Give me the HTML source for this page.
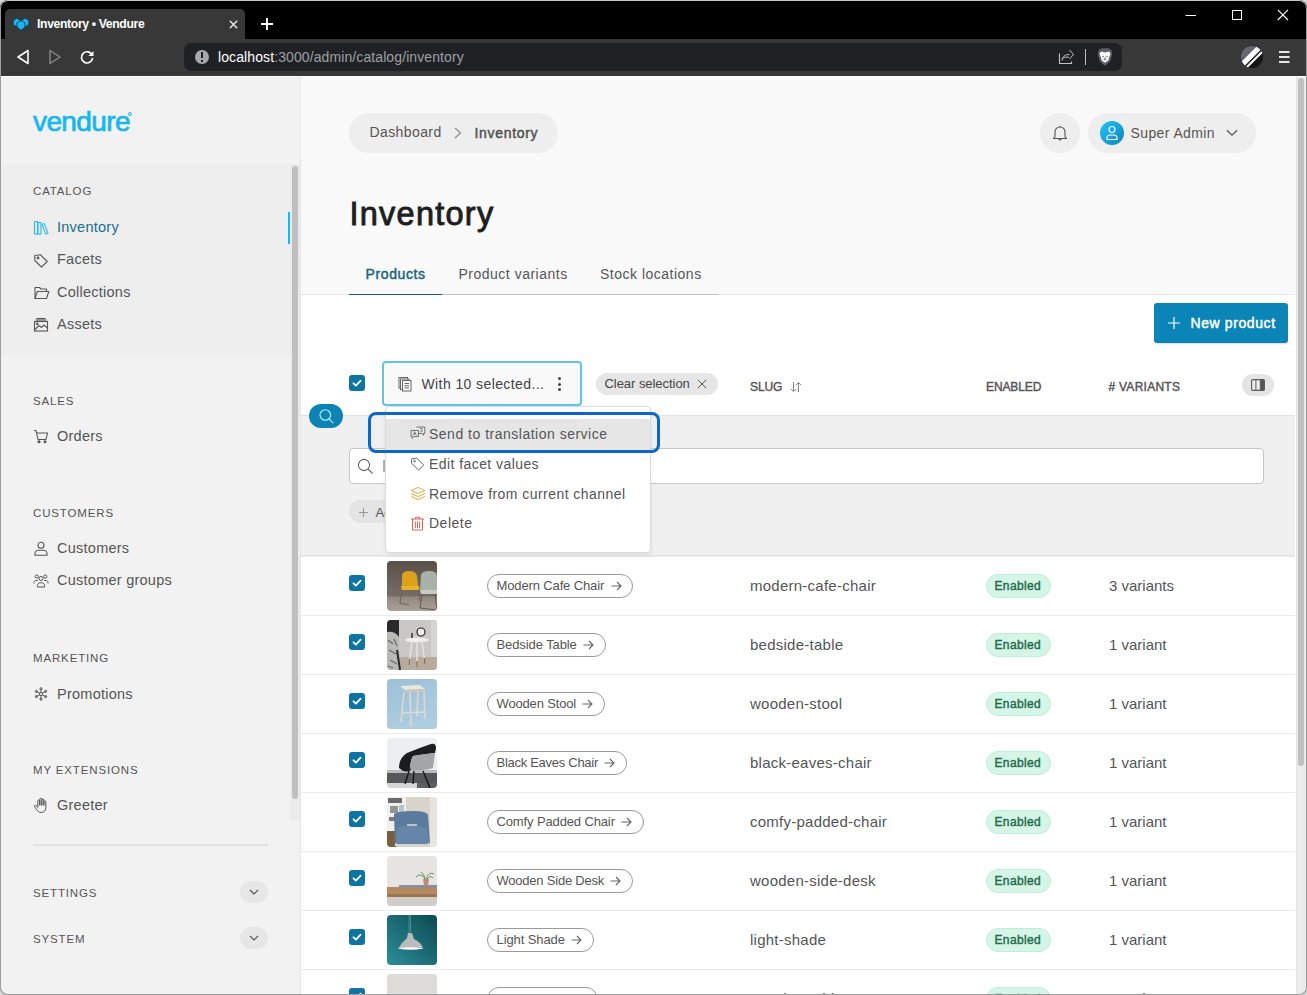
<!DOCTYPE html>
<html><head><meta charset="utf-8">
<style>
*{box-sizing:border-box;margin:0;padding:0}
html,body{width:1307px;height:995px;overflow:hidden;background:#d6d6d6;font-family:"Liberation Sans",sans-serif}
.a{position:absolute}
.t{position:absolute;white-space:nowrap;line-height:1}
svg{position:absolute;overflow:visible}
#win{position:absolute;left:0;top:0;width:1307px;height:995px;border-radius:8px;overflow:hidden;background:#000}
#frame{position:absolute;left:0;top:0;width:1307px;height:995px;border-radius:8px;border:1px solid #9c9c9c;border-top-color:#c8c8c8;z-index:50;pointer-events:none}
.sec{color:#555;font-size:11.5px;letter-spacing:0.85px}
.nav{color:#555;font-size:14.5px;letter-spacing:0.25px}
.ico{stroke:#555;fill:none;stroke-width:1.1}
.chk{width:16px;height:16px;border-radius:3px;background:#0d74a3}
.pill{height:24px;border:1px solid #9a9a9a;border-radius:12px;background:#fff}
.pt{font-size:13px;color:#555;letter-spacing:-0.15px}
.st{font-size:15px;color:#555;letter-spacing:0.25px}
.badge{width:65px;height:24px;border-radius:12px;background:#d5f6e7;border:1px solid #bdeed7}
.bt{font-size:12px;color:#1f6a4a;letter-spacing:0.35px;-webkit-text-stroke:0.4px #1f6a4a}
</style></head><body>
<div id="win">
  <!-- tab strip -->
  <div class="a" style="left:5px;top:9px;width:240px;height:30px;background:#383838;border-radius:5px 5px 0 0"></div>
  <!-- toolbar -->
  <div class="a" style="left:0;top:39px;width:1307px;height:37px;background:#383838"></div>
  <div class="a" style="left:184px;top:43px;width:938px;height:28px;background:#202124;border-radius:7px"></div>
  <div class="a" style="left:0;top:76px;width:1307px;height:1px;background:#fdfdfd"></div>
  <!-- favicon -->
  <svg style="left:12px;top:17px" width="18" height="14" viewBox="0 0 18 14">
    <path d="M1.2 3.6 L4.8 1.2 L8.6 3.4 L8.6 7.6 L5 10 L1.2 7.4Z" fill="#22b5ee" stroke="#0b3c55" stroke-width="0.9"/>
    <path d="M9.4 3.4 L13.2 1.2 L16.8 3.6 L16.8 7.4 L13 10 L9.4 7.6Z" fill="#22b5ee" stroke="#0b3c55" stroke-width="0.9"/>
    <path d="M5 5.8 L9 3.5 L13 5.8 L13 10.2 L9 13.3 L5 10.2Z" fill="#1ab8f2" stroke="#0b3c55" stroke-width="0.9"/>
  </svg>
  <div class="t" style="left:37px;top:18px;font-size:12.2px;font-weight:700;color:#fff;letter-spacing:-0.35px">Inventory • Vendure</div>
  <svg style="left:228.5px;top:19.5px" width="9" height="9" viewBox="0 0 9 9"><path d="M0.8 0.8L8.2 8.2M8.2 0.8L0.8 8.2" stroke="#f0f0f0" stroke-width="1.3"/></svg>
  <svg style="left:261px;top:18px" width="12" height="12" viewBox="0 0 12 12"><path d="M6 0V12M0 6H12" stroke="#fff" stroke-width="1.9"/></svg>
  <!-- window controls -->
  <svg style="left:1185px;top:10px" width="12" height="10" viewBox="0 0 12 10"><path d="M0.5 5.5H11" stroke="#fff" stroke-width="1"/></svg>
  <svg style="left:1232px;top:10px" width="11" height="11" viewBox="0 0 11 11"><rect x="0.5" y="0.5" width="9" height="9" stroke="#fff" stroke-width="1" fill="none"/></svg>
  <svg style="left:1277px;top:9px" width="12" height="12" viewBox="0 0 12 12"><path d="M0.8 0.8L11 11M11 0.8L0.8 11" stroke="#fff" stroke-width="1.1"/></svg>
  <!-- nav buttons -->
  <svg style="left:16px;top:49px" width="14" height="16" viewBox="0 0 14 16"><path d="M12 1.5 L2 8 L12 14.5Z" stroke="#fff" stroke-width="1.6" fill="none" stroke-linejoin="round"/></svg>
  <svg style="left:48px;top:49px" width="14" height="16" viewBox="0 0 14 16"><path d="M2 1.5 L12 8 L2 14.5Z" stroke="#8a8a8a" stroke-width="1.4" fill="none" stroke-linejoin="round"/></svg>
  <svg style="left:79px;top:49px" width="16" height="16" viewBox="0 0 16 16"><path d="M13.2 6.2 A5.6 5.6 0 1 0 13.6 9" stroke="#fff" stroke-width="1.7" fill="none"/><path d="M14.5 2 L14.5 7 L9.5 7Z" fill="#fff"/></svg>
  <!-- omnibox content -->
  <div class="a" style="left:195px;top:50px;width:14px;height:14px;border-radius:50%;background:#a6a8ad"></div>
  <div class="a" style="left:201px;top:52px;width:2px;height:6px;background:#202124"></div>
  <div class="a" style="left:201px;top:59.5px;width:2px;height:2px;background:#202124"></div>
  <div class="t" style="left:218px;top:50px;font-size:14px;color:#fff;letter-spacing:0.1px">localhost<span style="color:#9aa0a6">:3000/admin/catalog/inventory</span></div>
  <svg style="left:1058px;top:49px" width="17" height="16" viewBox="0 0 17 16"><path d="M1.5 4.5 V14.5 H13.5 V12.5" stroke="#c4c4c4" stroke-width="1.1" fill="none"/><path d="M4 11.5 C4.5 7 7.5 5.5 11.5 5.5 M11.5 1 L15.5 5.5 L11.5 10 M4.3 10 C6 7.8 8.5 7.8 11 8.3" stroke="#c4c4c4" stroke-width="1" fill="none" stroke-linejoin="round"/></svg>
  <div class="a" style="left:1085px;top:49px;width:1px;height:16px;background:#bdbdbd"></div>
  <svg style="left:1097px;top:48px" width="16" height="18" viewBox="0 0 16 18">
    <path d="M3 0.8 L5.5 0.2 H10.5 L13 0.8 L15 3 L14.6 5.2 L15.2 6.5 L13.5 12.8 L10.5 15.8 L8 17.8 L5.5 15.8 L2.5 12.8 L0.8 6.5 L1.4 5.2 L1 3Z" fill="#5c5c68"/>
    <path d="M2.5 5 L4.5 3.5 L8 4.5 L11.5 3.5 L13.5 5 L13 7.5 L11.5 10.5 L12 11.5 L10 13.5 L8 14.8 L6 13.5 L4 11.5 L4.5 10.5 L3 7.5Z" fill="#fafafa"/>
    <path d="M5.2 8.3 L7 8.8 M10.8 8.3 L9 8.8 M8 9 V11.5 M6.5 11.8 L8 11.5 L9.5 11.8" stroke="#5c5c68" stroke-width="0.8" fill="none"/>
  </svg>
  <!-- extension / menu -->
  <svg style="left:1241px;top:46px" width="22" height="22" viewBox="0 0 22 22">
    <defs><clipPath id="cc"><circle cx="11" cy="11" r="11"/></clipPath><linearGradient id="eg" x1="0" y1="0" x2="1" y2="1"><stop offset="0" stop-color="#777a84"/><stop offset="1" stop-color="#4a4c55"/></linearGradient></defs>
    <g clip-path="url(#cc)"><rect width="22" height="22" fill="#151515"/><path d="M-2 -2 H18 L-2 18Z" fill="url(#eg)"/><path d="M18 -2 H25.5 L-2 25.5 V18Z" fill="#fff"/><path d="M27.5 -2 H30.5 L-2 30.5 V27.5Z" fill="#fff"/></g>
  </svg>
  <svg style="left:1279px;top:50px" width="11" height="14" viewBox="0 0 11 14"><path d="M0 2H10.5M0 7H10.5M0 12H10.5" stroke="#e6e6e6" stroke-width="2"/></svg>
  <!-- page -->
  <div class="a" id="side" style="left:0;top:77px;width:300px;height:918px;background:#f2f2f2"></div>
  <div class="a" style="left:300px;top:77px;width:1px;height:918px;background:#e6e6e6"></div>
  <div class="a" id="mainhdr" style="left:301px;top:77px;width:1006px;height:218px;background:#f9f9f9"></div>
  <div class="a" id="mainbody" style="left:301px;top:295px;width:1006px;height:700px;background:#fff"></div>
  <!-- sidebar -->
  <div class="a" style="left:0;top:164px;width:291px;height:193px;background:#eeeeee"></div>
  <div class="a" style="left:290px;top:164px;width:10px;height:656px;background:#ebebeb"></div>
  <div class="a" style="left:292px;top:166px;width:6px;height:633px;background:#bfbfbf;border-radius:3px"></div>
  <div class="a" style="left:288px;top:212px;width:2px;height:32px;background:#1fb5ef"></div>
  <div class="t" style="left:33px;top:108px;font-size:28px;color:#17b6ef;letter-spacing:-0.6px;-webkit-text-stroke:0.7px #17b6ef">vendure</div>
  <div class="a" style="left:128px;top:112px;width:4px;height:4px;border-radius:50%;border:1px solid #17b6ef"></div>
  <div class="t sec" style="left:33px;top:186px">CATALOG</div>
  <div class="t nav" style="left:57px;top:220px;color:#1c6d8c">Inventory</div>
  <div class="t nav" style="left:57px;top:252px">Facets</div>
  <div class="t nav" style="left:57px;top:284.5px">Collections</div>
  <div class="t nav" style="left:57px;top:317px">Assets</div>
  <div class="t sec" style="left:33px;top:395.5px">SALES</div>
  <div class="t nav" style="left:57px;top:429px">Orders</div>
  <div class="t sec" style="left:33px;top:507.5px">CUSTOMERS</div>
  <div class="t nav" style="left:57px;top:541px">Customers</div>
  <div class="t nav" style="left:57px;top:573px">Customer groups</div>
  <div class="t sec" style="left:33px;top:652.5px">MARKETING</div>
  <div class="t nav" style="left:57px;top:686.5px">Promotions</div>
  <div class="t sec" style="left:33px;top:765px">MY EXTENSIONS</div>
  <div class="t nav" style="left:57px;top:798px">Greeter</div>
  <div class="a" style="left:33px;top:844px;width:235px;height:2px;background:#e2e2e2"></div>
  <div class="t sec" style="left:33px;top:888px">SETTINGS</div>
  <div class="t sec" style="left:33px;top:933.5px">SYSTEM</div>
  <div class="a" style="left:240px;top:881px;width:28px;height:22px;border-radius:11px;background:#e6e6e6"></div>
  <div class="a" style="left:240px;top:927px;width:28px;height:22px;border-radius:11px;background:#e6e6e6"></div>
  <svg style="left:249px;top:889px" width="10" height="6" viewBox="0 0 10 6"><path d="M1 1L5 5L9 1" stroke="#555" stroke-width="1.2" fill="none"/></svg>
  <svg style="left:249px;top:935px" width="10" height="6" viewBox="0 0 10 6"><path d="M1 1L5 5L9 1" stroke="#555" stroke-width="1.2" fill="none"/></svg>
  <!-- main header -->
  <div class="a" style="left:301px;top:294px;width:994px;height:1px;background:#e8e8e8"></div>
  <div class="a" style="left:349px;top:294px;width:370px;height:1px;background:#c4c4c4"></div>
  <div class="a" style="left:349px;top:293.5px;width:93px;height:1.5px;background:#1d5a6c"></div>
  <div class="a" style="left:349px;top:113px;width:209px;height:40px;border-radius:20px;background:#eeeeee"></div>
  <div class="t" style="left:369.5px;top:125.2px;font-size:14px;color:#555;letter-spacing:0.4px">Dashboard</div>
  <svg style="left:453px;top:127px" width="10" height="12" viewBox="0 0 10 12"><path d="M2 1L7.5 6L2 11" stroke="#888" stroke-width="1.1" fill="none"/></svg>
  <div class="t" style="left:474.5px;top:126.2px;font-size:14px;color:#505050;letter-spacing:0.68px;-webkit-text-stroke:0.45px #505050">Inventory</div>
  <div class="t" style="left:349.5px;top:198px;font-size:32.5px;font-weight:400;color:#1e1e1e;letter-spacing:1.25px;-webkit-text-stroke:0.9px #1e1e1e">Inventory</div>
  <div class="t" style="left:365.5px;top:267.2px;font-size:14px;color:#17647d;letter-spacing:0.62px;-webkit-text-stroke:0.45px #17647d">Products</div>
  <div class="t" style="left:458.5px;top:267.2px;font-size:14px;color:#555;letter-spacing:0.5px">Product variants</div>
  <div class="t" style="left:600px;top:267.2px;font-size:14px;color:#555;letter-spacing:0.5px">Stock locations</div>
  <div class="a" style="left:1040px;top:113px;width:40px;height:40px;border-radius:50%;background:#eeeeee"></div>
  <svg style="left:1052px;top:125px" width="16" height="17" viewBox="0 0 16 17"><g stroke="#555" stroke-width="1.1" fill="none" stroke-linejoin="round"><path d="M1.5 13.5 H14.5 L13 11.5 V7 C13 4 10.8 2 8 2 C5.2 2 3 4 3 7 V11.5Z"/><path d="M6.8 13.8 C6.8 15.5 9.2 15.5 9.2 13.8"/><path d="M8 0.8V2"/></g></svg>
  <div class="a" style="left:1088px;top:113px;width:168px;height:40px;border-radius:20px;background:#eeeeee"></div>
  <div class="a" style="left:1100px;top:121px;width:24px;height:24px;border-radius:50%;background:linear-gradient(135deg,#22c4f8 0%,#0c84bb 100%)"></div>
  <svg style="left:1104px;top:124px" width="16" height="18" viewBox="0 0 16 18"><g stroke="#fff" stroke-width="1.1" fill="none"><circle cx="8" cy="5.5" r="3"/><path d="M3 15.5 V14 C3 12.2 4.5 11 6 11 H10 C11.5 11 13 12.2 13 14 V15.5Z"/></g></svg>
  <div class="t" style="left:1130.5px;top:126px;font-size:14px;color:#555;letter-spacing:0.4px">Super Admin</div>
  <svg style="left:1226px;top:129px" width="12" height="8" viewBox="0 0 12 8"><path d="M1 1.2L6 6.2L11 1.2" stroke="#555" stroke-width="1.3" fill="none"/></svg>
  <div class="a" style="left:301px;top:556px;width:994px;height:1px;background:#ebebeb"></div>
  <div class="a chk" style="left:349px;top:575px"></div>
  <svg style="left:351px;top:577px" width="12" height="12" viewBox="0 0 12 12"><path d="M2.5 6.3L4.9 8.6L9.6 3.6" stroke="#fff" stroke-width="1.8" fill="none" stroke-linecap="round" stroke-linejoin="round"/></svg>
  <svg style="left:387px;top:561px" width="50" height="50" viewBox="0 0 50 50"><defs><clipPath id="tc0"><rect width="50" height="50" rx="4"/></clipPath></defs><g clip-path="url(#tc0)"><defs><linearGradient id="w0" x1="0" y1="0" x2="0" y2="1"><stop offset="0" stop-color="#5a504a"/><stop offset="0.7" stop-color="#786d66"/><stop offset="0.72" stop-color="#938880"/><stop offset="1" stop-color="#aca199"/></linearGradient></defs>
 <rect width="50" height="50" fill="url(#w0)"/>
 <path d="M15 14 Q16 10 22 10 Q29 10 30 15 L31 25 L15 25Z" fill="#dca21c"/><path d="M14 25 L32 25 Q33 28 31 29 L15 29Z" fill="#e6b22a"/>
 <path d="M15 29 L13 42 M31 29 L33 40 M13 42 L22 44" stroke="#6a5c50" stroke-width="0.9" fill="none"/>
 <path d="M34 14 Q35 10 42 10 Q50 10 50 15 L50 30 L33 30Z" fill="#a9b2a7"/><path d="M33 29 H50 V33 H34Z" fill="#c9ccc2"/>
 <path d="M35 33 L33 47 M48 33 L50 48 M33 47 L50 49" stroke="#5b5048" stroke-width="0.9" fill="none"/></g></svg>
  <div class="a pill" style="left:487px;top:574px;width:146.0px"></div>
  <div class="t pt" style="left:496.5px;top:579.3px;letter-spacing:-0.13px">Modern Cafe Chair</div>
  <svg style="left:610.5px;top:581px" width="11" height="10" viewBox="0 0 11 10"><path d="M0.5 5H10M6 1L10 5L6 9" stroke="#666" stroke-width="1.1" fill="none"/></svg>
  <div class="t st" style="left:750px;top:578.4px">modern-cafe-chair</div>
  <div class="a badge" style="left:986px;top:574px"></div>
  <div class="t bt" style="left:994.5px;top:579.9px">Enabled</div>
  <div class="t st" style="left:1109px;top:578.4px;letter-spacing:0">3 variants</div>
  <div class="a" style="left:301px;top:615px;width:994px;height:1px;background:#ebebeb"></div>
  <div class="a chk" style="left:349px;top:634px"></div>
  <svg style="left:351px;top:636px" width="12" height="12" viewBox="0 0 12 12"><path d="M2.5 6.3L4.9 8.6L9.6 3.6" stroke="#fff" stroke-width="1.8" fill="none" stroke-linecap="round" stroke-linejoin="round"/></svg>
  <svg style="left:387px;top:620px" width="50" height="50" viewBox="0 0 50 50"><defs><clipPath id="tc1"><rect width="50" height="50" rx="4"/></clipPath></defs><g clip-path="url(#tc1)"><rect width="50" height="50" fill="#bdbcba"/><rect x="12" y="0" width="38" height="38" fill="#c9c8c6"/><rect x="44" y="0" width="6" height="50" fill="#d6d5d3"/>
 <rect width="12" height="20" fill="#2a2a2a"/><path d="M0 12 Q8 11 12 17 L13 50 H0Z" fill="#b9b9b7"/>
 <path d="M1 20 L6 24 M7 19 L10 26 M2 30 L9 34 M3 40 L10 44 M1 46 L6 48" stroke="#6b6b6b" stroke-width="1.2"/>
 <rect x="12" y="37" width="38" height="13" fill="#b6ab9c"/><path d="M10 30 L13 50" stroke="#2a2a2a" stroke-width="2"/>
 <ellipse cx="30" cy="20" rx="12" ry="2.5" fill="#efefef"/>
 <path d="M25 21 L22 45 M35 21 L38 44 M30 22 L30 47" stroke="#e5e5e5" stroke-width="1.4"/><path d="M22.7 39 L22 45 M37.3 38 L38 44 M30 41 V47" stroke="#8a6b4a" stroke-width="1.4"/>
 <circle cx="34" cy="12" r="4" fill="#eee" stroke="#222" stroke-width="1.2"/><path d="M25 13 V18" stroke="#555" stroke-width="2"/></g></svg>
  <div class="a pill" style="left:487px;top:633px;width:118.5px"></div>
  <div class="t pt" style="left:496.5px;top:638.3px;letter-spacing:-0.09px">Bedside Table</div>
  <svg style="left:583.0px;top:640px" width="11" height="10" viewBox="0 0 11 10"><path d="M0.5 5H10M6 1L10 5L6 9" stroke="#666" stroke-width="1.1" fill="none"/></svg>
  <div class="t st" style="left:750px;top:637.4px">bedside-table</div>
  <div class="a badge" style="left:986px;top:633px"></div>
  <div class="t bt" style="left:994.5px;top:638.9px">Enabled</div>
  <div class="t st" style="left:1109px;top:637.4px;letter-spacing:0">1 variant</div>
  <div class="a" style="left:301px;top:674px;width:994px;height:1px;background:#ebebeb"></div>
  <div class="a chk" style="left:349px;top:693px"></div>
  <svg style="left:351px;top:695px" width="12" height="12" viewBox="0 0 12 12"><path d="M2.5 6.3L4.9 8.6L9.6 3.6" stroke="#fff" stroke-width="1.8" fill="none" stroke-linecap="round" stroke-linejoin="round"/></svg>
  <svg style="left:387px;top:679px" width="50" height="50" viewBox="0 0 50 50"><defs><clipPath id="tc2"><rect width="50" height="50" rx="4"/></clipPath></defs><g clip-path="url(#tc2)"><defs><linearGradient id="w2" x1="0" y1="0" x2="0.3" y2="1"><stop offset="0" stop-color="#9dbfd6"/><stop offset="1" stop-color="#aecde0"/></linearGradient></defs>
 <rect width="50" height="50" fill="url(#w2)"/>
 <path d="M13 7 L33 6 L38 10 L18 11Z" fill="#e9e6e0"/><path d="M18 11 L38 10 L38 12.5 L18 13.5Z" fill="#c9c6c0"/>
 <path d="M17 13 L14 43 M37 12 L38 40 M23 13 L24 47 M31 12 L30 37 M15 34 L37 33" stroke="#dcdad6" stroke-width="1.5" fill="none"/></g></svg>
  <div class="a pill" style="left:487px;top:692px;width:117.5px"></div>
  <div class="t pt" style="left:496.5px;top:697.3px;letter-spacing:-0.16px">Wooden Stool</div>
  <svg style="left:582.0px;top:699px" width="11" height="10" viewBox="0 0 11 10"><path d="M0.5 5H10M6 1L10 5L6 9" stroke="#666" stroke-width="1.1" fill="none"/></svg>
  <div class="t st" style="left:750px;top:696.4px">wooden-stool</div>
  <div class="a badge" style="left:986px;top:692px"></div>
  <div class="t bt" style="left:994.5px;top:697.9px">Enabled</div>
  <div class="t st" style="left:1109px;top:696.4px;letter-spacing:0">1 variant</div>
  <div class="a" style="left:301px;top:733px;width:994px;height:1px;background:#ebebeb"></div>
  <div class="a chk" style="left:349px;top:752px"></div>
  <svg style="left:351px;top:754px" width="12" height="12" viewBox="0 0 12 12"><path d="M2.5 6.3L4.9 8.6L9.6 3.6" stroke="#fff" stroke-width="1.8" fill="none" stroke-linecap="round" stroke-linejoin="round"/></svg>
  <svg style="left:387px;top:738px" width="50" height="50" viewBox="0 0 50 50"><defs><clipPath id="tc3"><rect width="50" height="50" rx="4"/></clipPath></defs><g clip-path="url(#tc3)"><rect width="50" height="50" fill="#eceef0"/><rect y="32" width="50" height="3" fill="#b9babc"/><rect y="35" width="50" height="11" fill="#55575b"/><rect y="45" width="30" height="5" fill="#d5d5d5"/><rect x="30" y="45" width="20" height="5" fill="#5d5f63"/>
 <path d="M12 30 Q12 20 20 15 Q32 10 44 6 Q49 5 49 10 L48 15 Q40 16 26 18 Q22 26 24 32 Q18 36 12 30Z" fill="#1c1d1f"/>
 <path d="M26 18 Q38 16 48 15 L46 30 Q38 33 24 32 Q22 25 26 18Z" fill="#a3a5a8"/>
 <path d="M22 33 L18 46 M36 33 L43 50 M27 33 L26 46" stroke="#141414" stroke-width="1.4"/></g></svg>
  <div class="a pill" style="left:487px;top:751px;width:139.6px"></div>
  <div class="t pt" style="left:496.5px;top:756.3px;letter-spacing:-0.28px">Black Eaves Chair</div>
  <svg style="left:604.1px;top:758px" width="11" height="10" viewBox="0 0 11 10"><path d="M0.5 5H10M6 1L10 5L6 9" stroke="#666" stroke-width="1.1" fill="none"/></svg>
  <div class="t st" style="left:750px;top:755.4px">black-eaves-chair</div>
  <div class="a badge" style="left:986px;top:751px"></div>
  <div class="t bt" style="left:994.5px;top:756.9px">Enabled</div>
  <div class="t st" style="left:1109px;top:755.4px;letter-spacing:0">1 variant</div>
  <div class="a" style="left:301px;top:792px;width:994px;height:1px;background:#ebebeb"></div>
  <div class="a chk" style="left:349px;top:811px"></div>
  <svg style="left:351px;top:813px" width="12" height="12" viewBox="0 0 12 12"><path d="M2.5 6.3L4.9 8.6L9.6 3.6" stroke="#fff" stroke-width="1.8" fill="none" stroke-linecap="round" stroke-linejoin="round"/></svg>
  <svg style="left:387px;top:797px" width="50" height="50" viewBox="0 0 50 50"><defs><clipPath id="tc4"><rect width="50" height="50" rx="4"/></clipPath></defs><g clip-path="url(#tc4)"><rect width="50" height="50" fill="#d8d3cb"/><rect width="19" height="34" fill="#f0f0ee"/><rect x="1" y="1" width="14" height="5" fill="#6a6a6a"/><rect x="3" y="9" width="8" height="7" fill="#8f9595"/><rect x="12" y="8" width="5" height="10" fill="#b8c4c4"/><rect x="2" y="20" width="14" height="4" fill="#7c7c7c"/>
 <rect y="34" width="9" height="16" fill="#7b5e40"/><rect x="43" y="0" width="7" height="50" fill="#e7e3dd"/>
 <path d="M7 17 Q10 14 26 14 Q40 14 41 18 L42 32 L43 47 L8 47Z" fill="#5b7b9c"/><path d="M10 30 Q26 27 40 31 L42 47 L9 47Z" fill="#6586a8"/>
 <path d="M20 28 L30 28" stroke="#d8dde2" stroke-width="1.4"/><path d="M41 46 L46 49 M9 46 L8 49" stroke="#eee" stroke-width="1"/></g></svg>
  <div class="a pill" style="left:487px;top:810px;width:156.5px"></div>
  <div class="t pt" style="left:496.5px;top:815.3px;letter-spacing:-0.13px">Comfy Padded Chair</div>
  <svg style="left:621.0px;top:817px" width="11" height="10" viewBox="0 0 11 10"><path d="M0.5 5H10M6 1L10 5L6 9" stroke="#666" stroke-width="1.1" fill="none"/></svg>
  <div class="t st" style="left:750px;top:814.4px">comfy-padded-chair</div>
  <div class="a badge" style="left:986px;top:810px"></div>
  <div class="t bt" style="left:994.5px;top:815.9px">Enabled</div>
  <div class="t st" style="left:1109px;top:814.4px;letter-spacing:0">1 variant</div>
  <div class="a" style="left:301px;top:851px;width:994px;height:1px;background:#ebebeb"></div>
  <div class="a chk" style="left:349px;top:870px"></div>
  <svg style="left:351px;top:872px" width="12" height="12" viewBox="0 0 12 12"><path d="M2.5 6.3L4.9 8.6L9.6 3.6" stroke="#fff" stroke-width="1.8" fill="none" stroke-linecap="round" stroke-linejoin="round"/></svg>
  <svg style="left:387px;top:856px" width="50" height="50" viewBox="0 0 50 50"><defs><clipPath id="tc5"><rect width="50" height="50" rx="4"/></clipPath></defs><g clip-path="url(#tc5)"><rect width="50" height="50" fill="#e6e5e3"/><rect y="40" width="50" height="10" fill="#d1cdcb"/>
 <rect x="0" y="31" width="50" height="10" fill="#b58b5f"/><rect x="0" y="38" width="50" height="3" fill="#9b7450"/><rect x="12" y="29" width="38" height="3" fill="#8d8f93"/>
 <path d="M36 23 L37 29 L41 29 L42 23Z" fill="#c8847c"/><path d="M38 23 Q34 16 29 21 M39 23 Q42 15 47 18 M38 23 Q37 17 34 16 M40 23 Q43 19 46 22" stroke="#5c8a4c" stroke-width="0.9" fill="none"/></g></svg>
  <div class="a pill" style="left:487px;top:869px;width:145.6px"></div>
  <div class="t pt" style="left:496.5px;top:874.3px;letter-spacing:-0.22px">Wooden Side Desk</div>
  <svg style="left:610.1px;top:876px" width="11" height="10" viewBox="0 0 11 10"><path d="M0.5 5H10M6 1L10 5L6 9" stroke="#666" stroke-width="1.1" fill="none"/></svg>
  <div class="t st" style="left:750px;top:873.4px">wooden-side-desk</div>
  <div class="a badge" style="left:986px;top:869px"></div>
  <div class="t bt" style="left:994.5px;top:874.9px">Enabled</div>
  <div class="t st" style="left:1109px;top:873.4px;letter-spacing:0">1 variant</div>
  <div class="a" style="left:301px;top:910px;width:994px;height:1px;background:#ebebeb"></div>
  <div class="a chk" style="left:349px;top:929px"></div>
  <svg style="left:351px;top:931px" width="12" height="12" viewBox="0 0 12 12"><path d="M2.5 6.3L4.9 8.6L9.6 3.6" stroke="#fff" stroke-width="1.8" fill="none" stroke-linecap="round" stroke-linejoin="round"/></svg>
  <svg style="left:387px;top:915px" width="50" height="50" viewBox="0 0 50 50"><defs><clipPath id="tc6"><rect width="50" height="50" rx="4"/></clipPath></defs><g clip-path="url(#tc6)"><defs><linearGradient id="lg" x1="1" y1="0" x2="0" y2="1"><stop offset="0" stop-color="#0d4a52"/><stop offset="1" stop-color="#2b8e98"/></linearGradient></defs>
 <rect width="50" height="50" fill="url(#lg)"/><path d="M22 0 V18 M23.5 0 V17" stroke="#cfe" stroke-width="0.4" opacity="0.7"/>
 <path d="M21 18 H25 L27 24 Q35 28 36 34 H11 Q14 28 20 23Z" fill="#b9bcbc"/><path d="M11 33.5 Q23 31 36 33.5 Q24 36 11 33.5Z" fill="#fff"/></g></svg>
  <div class="a pill" style="left:487px;top:928px;width:106.6px"></div>
  <div class="t pt" style="left:496.5px;top:933.3px;letter-spacing:-0.1px">Light Shade</div>
  <svg style="left:571.1px;top:935px" width="11" height="10" viewBox="0 0 11 10"><path d="M0.5 5H10M6 1L10 5L6 9" stroke="#666" stroke-width="1.1" fill="none"/></svg>
  <div class="t st" style="left:750px;top:932.4px">light-shade</div>
  <div class="a badge" style="left:986px;top:928px"></div>
  <div class="t bt" style="left:994.5px;top:933.9px">Enabled</div>
  <div class="t st" style="left:1109px;top:932.4px;letter-spacing:0">1 variant</div>
  <div class="a" style="left:301px;top:969px;width:994px;height:1px;background:#ebebeb"></div>
  <div class="a chk" style="left:349px;top:988px"></div>
  <svg style="left:351px;top:990px" width="12" height="12" viewBox="0 0 12 12"><path d="M2.5 6.3L4.9 8.6L9.6 3.6" stroke="#fff" stroke-width="1.8" fill="none" stroke-linecap="round" stroke-linejoin="round"/></svg>
  <svg style="left:387px;top:974px" width="50" height="50" viewBox="0 0 50 50"><defs><clipPath id="tc7"><rect width="50" height="50" rx="4"/></clipPath></defs><g clip-path="url(#tc7)"><rect width="50" height="50" fill="#dedcd8"/></g></svg>
  <div class="a pill" style="left:487px;top:987px;width:111.0px"></div>
  <div class="t pt" style="left:496.5px;top:992.3px;letter-spacing:-0.1px">Wooden Table</div>
  <svg style="left:575.5px;top:994px" width="11" height="10" viewBox="0 0 11 10"><path d="M0.5 5H10M6 1L10 5L6 9" stroke="#666" stroke-width="1.1" fill="none"/></svg>
  <div class="t st" style="left:750px;top:991.4px">wooden-table</div>
  <div class="a badge" style="left:986px;top:987px"></div>
  <div class="t bt" style="left:994.5px;top:992.9px">Enabled</div>
  <div class="t st" style="left:1109px;top:991.4px;letter-spacing:0">1 variant</div>
  <!-- body toolbar -->
  <div class="a" style="left:1154px;top:303px;width:134px;height:40px;background:#0b85b7;border-radius:3px;box-shadow:0 1px 2px rgba(0,0,0,0.15)"></div>
  <svg style="left:1167px;top:316px" width="14" height="14" viewBox="0 0 14 14"><path d="M7 1V13M1 7H13" stroke="#fff" stroke-width="1.2"/></svg>
  <div class="t" style="left:1190.5px;top:316.2px;font-size:14px;color:#fff;letter-spacing:0.6px;-webkit-text-stroke:0.45px #fff">New product</div>
  <div class="a chk" style="left:349px;top:375px"></div>
  <svg style="left:351px;top:377px" width="12" height="12" viewBox="0 0 12 12"><path d="M2.5 6.3L4.9 8.6L9.6 3.6" stroke="#fff" stroke-width="1.8" fill="none" stroke-linecap="round" stroke-linejoin="round"/></svg>
  <div class="a" style="left:382px;top:361px;width:200px;height:45px;border:2px solid #5ec4ee;border-radius:4px;background:#f9f9f9"></div>
  <svg style="left:398px;top:376px" width="15" height="16" viewBox="0 0 15 16"><g stroke="#666" stroke-width="1" fill="#f9f9f9"><rect x="1" y="1.5" width="8.5" height="10.5"/><rect x="2.5" y="3" width="8.5" height="10.5"/><rect x="4.5" y="4.5" width="8.5" height="10.5"/></g><path d="M6.5 7.5H11M6.5 9.7H11M6.5 11.9H11" stroke="#666" stroke-width="1"/></svg>
  <div class="t" style="left:421.5px;top:377px;font-size:14px;color:#444;letter-spacing:0.4px">With 10 selected...</div>
  <div class="a" style="left:558px;top:377px;width:3px;height:3px;border-radius:50%;background:#444"></div>
  <div class="a" style="left:558px;top:382.5px;width:3px;height:3px;border-radius:50%;background:#444"></div>
  <div class="a" style="left:558px;top:388px;width:3px;height:3px;border-radius:50%;background:#444"></div>
  <div class="a" style="left:596px;top:373px;width:122px;height:22px;border-radius:11px;background:#e6e6e6"></div>
  <div class="t" style="left:604.5px;top:376.9px;font-size:13px;color:#444;letter-spacing:-0.05px">Clear selection</div>
  <svg style="left:697px;top:379px" width="10" height="10" viewBox="0 0 10 10"><path d="M0.8 0.8L9.2 9.2M9.2 0.8L0.8 9.2" stroke="#555" stroke-width="1"/></svg>
  <div class="t" style="left:750px;top:380.7px;font-size:12px;color:#555;letter-spacing:-0.1px;-webkit-text-stroke:0.4px #555">SLUG</div>
  <svg style="left:790px;top:381px" width="12" height="12" viewBox="0 0 12 12"><g stroke="#888" stroke-width="1" fill="none"><path d="M3.5 1V10.5M1 8L3.5 10.5L6 8"/><path d="M8.5 11V1.5M6 4L8.5 1.5L11 4"/></g></svg>
  <div class="t" style="left:986px;top:380.7px;font-size:12px;color:#555;letter-spacing:-0.1px;-webkit-text-stroke:0.4px #555">ENABLED</div>
  <div class="t" style="left:1108.5px;top:380.7px;font-size:12px;color:#555;letter-spacing:0.25px;-webkit-text-stroke:0.4px #555"># VARIANTS</div>
  <div class="a" style="left:1242px;top:374px;width:32px;height:22px;border-radius:11px;background:#e4e4e4"></div>
<svg style="left:1251px;top:379px" width="14" height="12" viewBox="0 0 14 12"><rect x="0.6" y="0.6" width="12.8" height="10.8" rx="1.2" stroke="#5a5a5a" stroke-width="1.1" fill="#ececec"/><rect x="9.3" y="0.6" width="4.1" height="10.8" fill="#555"/><path d="M4.9 0.8V11.2M9.3 0.8V11.2" stroke="#5a5a5a" stroke-width="1"/></svg>
  <div class="a" style="left:301px;top:415px;width:994px;height:1px;background:#e2e2e2"></div>
  <!-- filter area -->
  <div class="a" style="left:301px;top:416px;width:994px;height:140px;background:#f0f0f0"></div>
  <div class="a" style="left:349px;top:448px;width:915px;height:36px;border:1px solid #c6c6c6;border-radius:4px;background:#fff"></div>
  <svg style="left:357px;top:458px" width="17" height="17" viewBox="0 0 17 17"><circle cx="7" cy="7" r="5.6" stroke="#666" stroke-width="1.1" fill="none"/><path d="M11 11L15.5 15.5" stroke="#666" stroke-width="1.1"/></svg>
  <div class="a" style="left:383px;top:460px;width:2px;height:12px;background:#bdb3b3"></div>
  <div class="a" style="left:349px;top:500px;width:90px;height:23px;border-radius:12px;background:#e4e4e4"></div>
  <svg style="left:358.5px;top:507.5px" width="9" height="9" viewBox="0 0 9 9"><path d="M4.5 0V9M0 4.5H9" stroke="#999" stroke-width="1.1"/></svg>
  <div class="t" style="left:375.5px;top:505.5px;font-size:13px;color:#555">Add filter</div>
  <div class="a" style="left:301px;top:555px;width:994px;height:1px;background:#e2e2e2"></div>
  <!-- search toggle -->
  <div class="a" style="left:309px;top:404px;width:34px;height:24px;border-radius:12px;background:#0b83b5"></div>
  <svg style="left:318px;top:408px" width="17" height="17" viewBox="0 0 17 17"><circle cx="7.3" cy="7" r="5.3" stroke="#bdf4ff" stroke-width="1.1" fill="none"/><path d="M11 10.8L15.3 15.2" stroke="#bdf4ff" stroke-width="1.1"/></svg>
  <!-- dropdown -->
  <div class="a" style="left:385px;top:406px;width:266px;height:147px;background:#fff;border:1px solid #dcdcdc;border-radius:4px;box-shadow:0 2px 4px rgba(0,0,0,0.08)"></div>
  <div class="a" style="left:386px;top:419px;width:264px;height:31px;background:#e6e6e6"></div>
  <svg style="left:410px;top:426px" width="16" height="14" viewBox="0 0 16 14"><g stroke="#666" stroke-width="0.9" fill="none" stroke-linejoin="round"><path d="M1 4.5 H8.5 V10.5 H4 L2.2 12.5 V10.5 H1Z"/><path d="M6.5 1 H14.8 V7.5 H13.5 V9.2 L11.8 7.5 H8.5"/><path d="M3 9.2 L4.7 5.8 L6.4 9.2 M3.7 8 H5.7" stroke-width="0.8"/><path d="M10 2.5 H12.5 M11.2 2.5 V3.3 M10.2 6 Q12 5 12.5 3.5 M10.8 4 Q11.5 5.5 12.8 6" stroke-width="0.7"/></g></svg>
  <div class="t" style="left:429px;top:426.6px;font-size:14px;color:#555;letter-spacing:0.5px">Send to translation service</div>
  <svg style="left:410px;top:457px" width="16" height="14" viewBox="0 0 16 14"><g stroke="#666" stroke-width="1" fill="none" stroke-linejoin="round"><path d="M1.8 1.8 L6.8 1.2 L13.8 8 L8.6 13 L1.5 6.3Z"/><circle cx="4.6" cy="4.3" r="0.8"/></g></svg>
  <div class="t" style="left:429px;top:456.7px;font-size:14px;color:#555;letter-spacing:0.43px">Edit facet values</div>
  <svg style="left:410px;top:486px" width="16" height="15" viewBox="0 0 16 15"><g stroke="#e2aa3c" stroke-width="1" fill="none" stroke-linejoin="round"><path d="M1 4.5 L8 1.5 L15 4.5 L8 7.5Z"/><path d="M1 7.5 L8 10.5 L15 7.5"/><path d="M1 10.5 L8 13.5 L15 10.5"/></g></svg>
  <div class="t" style="left:429px;top:486.6px;font-size:14px;color:#555;letter-spacing:0.45px">Remove from current channel</div>
  <svg style="left:410px;top:516px" width="15" height="15" viewBox="0 0 15 15"><g stroke="#da6252" stroke-width="1" fill="none"><path d="M1 3H14"/><path d="M5.5 3V1.3H9.5V3"/><path d="M2.5 3V14H12.5V3"/><path d="M5.3 5.5V12M7.5 5.5V12M9.7 5.5V12"/></g></svg>
  <div class="t" style="left:429px;top:516.3px;font-size:14px;color:#555;letter-spacing:0.5px">Delete</div>
  <div class="a" style="left:368px;top:412px;width:292px;height:41px;border:3px solid #0d66c9;border-radius:8px"></div>
  <!-- main scrollbar -->
  <div class="a" style="left:1296px;top:77px;width:11px;height:918px;background:#ececec;border-left:1px solid #e3e3e3"></div>
  <div class="a" style="left:1298px;top:78px;width:6px;height:688px;background:#c1c1c1;border-radius:3px"></div>
  <!-- sidebar icons -->
  <svg style="left:33px;top:220px" width="16" height="16" viewBox="0 0 16 16"><g stroke="#2db8ef" stroke-width="1.1" fill="none"><rect x="1.5" y="1.5" width="3" height="12.5"/><rect x="5" y="2.5" width="3" height="11.5"/><path d="M9 4.5L11.3 3.6L15 13.2L12.7 14.1Z"/></g></svg>
  <svg style="left:33px;top:253px" width="16" height="16" viewBox="0 0 16 16"><g stroke="#555" stroke-width="1.1" fill="none" stroke-linejoin="round"><path d="M1.8 2.5 L7.5 1.8 L14.2 8.5 L8.5 14.2 L1.8 7.5Z"/><circle cx="5" cy="5" r="0.9"/></g></svg>
  <svg style="left:33px;top:285px" width="17" height="16" viewBox="0 0 17 16"><g stroke="#555" stroke-width="1.1" fill="none" stroke-linejoin="round"><path d="M2 13.5 V2.5 H6.5 L8 4 H13.5 V6.5"/><path d="M2 13.5 L4.3 6.5 H15.8 L13.5 13.5Z"/></g></svg>
  <svg style="left:33px;top:317px" width="16" height="16" viewBox="0 0 16 16"><g stroke="#555" stroke-width="1.1" fill="none"><path d="M3.5 1.5H12.5"/><path d="M2.5 3H13.5"/><rect x="1.5" y="4.5" width="13" height="9.5"/><path d="M2 12.5L6 8.5L8.5 10.5L11 8L14.5 11"/><circle cx="4.2" cy="6.8" r="0.8"/></g></svg>
  <svg style="left:33px;top:429px" width="16" height="16" viewBox="0 0 16 16"><g stroke="#555" stroke-width="1.1" fill="none" stroke-linejoin="round"><path d="M1 1.5H3L5 10.5H13L14.5 4H4"/><circle cx="6" cy="12.8" r="1" fill="#555"/><circle cx="12" cy="12.8" r="1" fill="#555"/></g></svg>
  <svg style="left:33px;top:541px" width="16" height="16" viewBox="0 0 16 16"><g stroke="#555" stroke-width="1.1" fill="none"><circle cx="8" cy="4.3" r="3"/><path d="M2 14.2 V12.5 C2 10.5 3.8 9.2 5.5 9.2 H10.5 C12.2 9.2 14 10.5 14 12.5 V14.2Z"/></g></svg>
  <svg style="left:33px;top:573px" width="16" height="16" viewBox="0 0 16 16"><g stroke="#555" stroke-width="1" fill="none"><circle cx="8" cy="5.5" r="2"/><path d="M4.5 14 V12.3 C4.5 10.8 5.7 9.8 7 9.8 H9 C10.3 9.8 11.5 10.8 11.5 12.3 V14Z"/><circle cx="3.7" cy="3.6" r="1.6"/><path d="M1 10.5 V9.5 C1 8.3 2 7.5 3 7.5 H4.8"/><circle cx="12.3" cy="3.6" r="1.6"/><path d="M15 10.5 V9.5 C15 8.3 14 7.5 13 7.5 H11.2"/></g></svg>
  <svg style="left:34px;top:687px" width="14" height="14" viewBox="0 0 14 14"><g stroke="#555" stroke-width="1" fill="none"><path d="M7 1.5V12.5M2.2 4.2L11.8 9.8M2.2 9.8L11.8 4.2"/><circle cx="7" cy="7" r="1.6" fill="#f2f2f2"/><circle cx="7" cy="1.8" r="1.1"/><circle cx="7" cy="12.2" r="1.1"/><circle cx="2.4" cy="4.4" r="1.1"/><circle cx="11.6" cy="9.6" r="1.1"/><circle cx="2.4" cy="9.6" r="1.1"/><circle cx="11.6" cy="4.4" r="1.1"/></g></svg>
  <svg style="left:33px;top:797px" width="16" height="17" viewBox="0 0 16 17"><g stroke="#555" stroke-width="1" fill="none" stroke-linejoin="round" stroke-linecap="round"><path d="M4.8 9.5 V4 a1 1 0 0 1 2 0 V8"/><path d="M6.8 8 V2.3 a1 1 0 0 1 2 0 V8"/><path d="M8.8 8 V3 a1 1 0 0 1 2 0 V8"/><path d="M10.8 8 V4.8 a1 1 0 0 1 2 0 V10.5 C12.8 13.5 11 15.5 8.2 15.5 C6 15.5 5 14.5 3.8 12.8 L1.5 9.6 C1 8.8 2 7.8 2.8 8.4 L4.8 10.2"/></g></svg>
</div>
<div id="frame"></div>
</body></html>
